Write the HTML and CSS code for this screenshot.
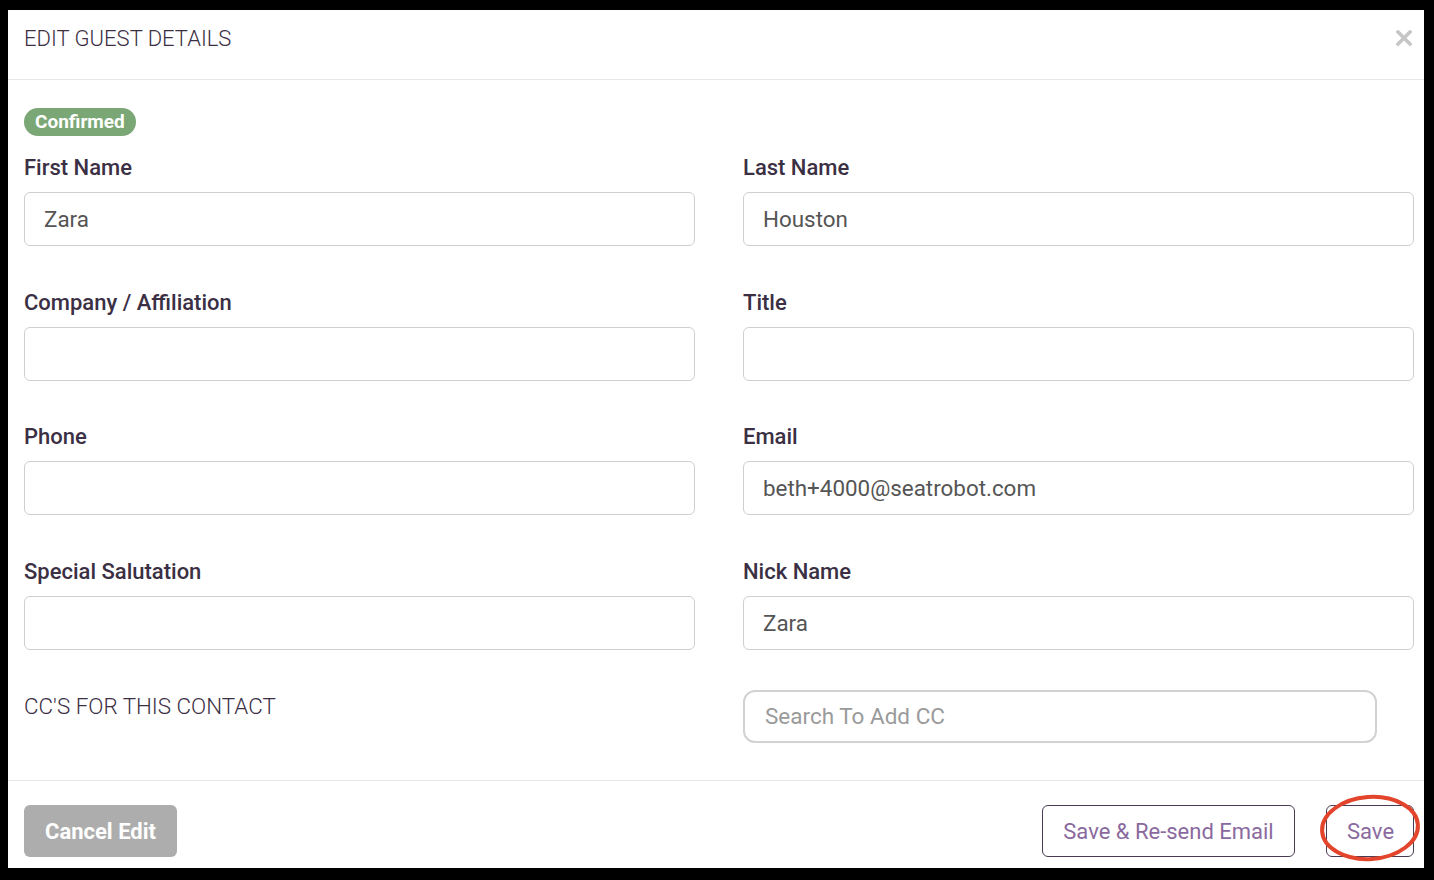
FILE: index.html
```html
<!DOCTYPE html>
<html lang="en">
<head>
  <meta charset="UTF-8">
  <title>Edit Guest Details</title>
  <link rel="stylesheet" href="styles.css">
</head>
<body>
  <div class="modal">
    <div class="modal-header">
      <h4 class="modal-title">EDIT GUEST DETAILS</h4>
      <button class="close-btn" aria-label="Close">
        <svg width="16" height="16" viewBox="0 0 16 16">
          <path d="M2 2 L14 14 M14 2 L2 14" stroke="#c6c6c6" stroke-width="3.6" stroke-linecap="square"/>
        </svg>
      </button>
    </div>

    <div class="modal-body">
      <span class="badge">Confirmed</span>

      <div class="form-grid">
        <div class="field">
          <label for="firstName">First Name</label>
          <input type="text" id="firstName" value="Zara">
        </div>
        <div class="field">
          <label for="lastName">Last Name</label>
          <input type="text" id="lastName" value="Houston">
        </div>

        <div class="field">
          <label for="company">Company / Affiliation</label>
          <input type="text" id="company">
        </div>
        <div class="field">
          <label for="title">Title</label>
          <input type="text" id="title">
        </div>

        <div class="field">
          <label for="phone">Phone</label>
          <input type="text" id="phone">
        </div>
        <div class="field">
          <label for="email">Email</label>
          <input type="text" id="email" value="beth+4000@seatrobot.com">
        </div>

        <div class="field">
          <label for="salutation">Special Salutation</label>
          <input type="text" id="salutation">
        </div>
        <div class="field">
          <label for="nickName">Nick Name</label>
          <input type="text" id="nickName" value="Zara">
        </div>
      </div>

      <div class="cc-row">
        <div class="cc-label">CC'S FOR THIS CONTACT</div>
        <div class="cc-search">
          <input type="text" placeholder="Search To Add CC">
        </div>
      </div>
    </div>

    <div class="modal-footer">
      <button class="btn btn-cancel">Cancel Edit</button>
      <div class="footer-right">
        <button class="btn btn-outline btn-resend">Save &amp; Re-send Email</button>
        <button class="btn btn-outline btn-save">Save</button>
      </div>
      <!-- red annotation circle around Save -->
      <svg class="annotation" width="110" height="74" viewBox="0 0 110 74">
        <ellipse cx="55" cy="37" rx="48" ry="31" fill="none" stroke="#e2452b" stroke-width="4" transform="rotate(-4 55 37)"/>
      </svg>
    </div>
  </div>
</body>
</html>
```

FILE: styles.css
```css
* {
  box-sizing: border-box;
}

body {
  margin: 0;
  padding: 10px 10px 12px 8px;
  background-color: #000;
  font-family: Roboto, "Liberation Sans", sans-serif;
  color: #3b2f44;
}

.modal {
  position: relative;
  background-color: #fff;
  width: 1416px;
  height: 858px;
  display: flex;
  flex-direction: column;
}

.modal-header {
  height: 70px;
  display: flex;
  align-items: flex-start;
  justify-content: space-between;
  padding: 15px 12px 0 16px;
  border-bottom: 1px solid #e6e6e6;
}

.modal-title {
  margin: 0;
  font-size: 22px;
  line-height: 28px;
  font-weight: 300;
  color: #3b2f44;
}

.close-btn {
  background: none;
  border: none;
  padding: 0;
  margin-top: 5px;
  cursor: pointer;
  line-height: 0;
}

.modal-body {
  flex: 1;
  padding: 28px 10px 0 16px;
}

.badge {
  display: inline-block;
  height: 28px;
  line-height: 28px;
  padding: 0 11px;
  border-radius: 14px;
  background-color: #7ba776;
  color: #fff;
  font-size: 19px;
  font-weight: 700;
}

.form-grid {
  display: grid;
  grid-template-columns: 671px 671px;
  column-gap: 48px;
  row-gap: 44.5px;
  margin-top: 20px;
}

.field label {
  display: block;
  height: 24px;
  line-height: 24px;
  font-size: 22px;
  font-weight: 500;
  color: #3b2f44;
  margin-bottom: 12px;
}

.field input {
  display: block;
  width: 100%;
  height: 54px;
  padding: 0 19px;
  border: 1px solid #cfcfcf;
  border-radius: 6px;
  font-family: inherit;
  font-size: 22.4px;
  color: #555;
  outline: none;
}

.cc-row {
  display: grid;
  grid-template-columns: 671px 634px;
  column-gap: 48px;
  margin-top: 40px;
}

.cc-label {
  font-size: 22.4px;
  font-weight: 300;
  line-height: 32px;
  color: #3b2f44;
}

.cc-search input {
  display: block;
  width: 100%;
  height: 53px;
  padding: 0 20px;
  border: 2px solid #d2d2d2;
  border-radius: 12px;
  font-family: inherit;
  font-size: 22.5px;
  color: #555;
  outline: none;
}

.cc-search input::placeholder {
  color: #9a9a9a;
}

.modal-footer {
  position: relative;
  height: 88px;
  display: flex;
  align-items: flex-start;
  justify-content: space-between;
  padding: 24px 10px 0 16px;
  border-top: 1px solid #e6e6e6;
}

.footer-right {
  display: flex;
  gap: 31px;
}

.btn {
  height: 52px;
  padding: 0 20px;
  border-radius: 6px;
  font-family: inherit;
  font-size: 22px;
  cursor: pointer;
}

.btn-cancel {
  width: 153px;
  border: none;
  background-color: #adadad;
  color: #fff;
  font-weight: 700;
}

.btn-outline {
  background-color: #fff;
  border: 1px solid #4a3b52;
  color: #8a6a9e;
}

.btn-resend {
  width: 253px;
}

.btn-save {
  width: 88px;
}

.annotation {
  position: absolute;
  right: -1px;
  top: 10px;
}
```
